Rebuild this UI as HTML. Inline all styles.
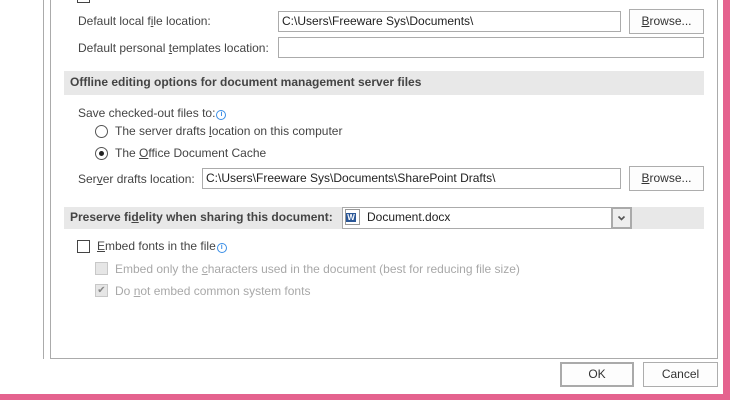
<!DOCTYPE html>
<html><head><meta charset="utf-8"><style>
*{box-sizing:border-box;margin:0;padding:0}
body{width:730px;height:400px;overflow:hidden;background:#fff;position:relative;font-family:"Liberation Sans",sans-serif;font-size:12px;color:#444}
.a{position:absolute}
.t{position:absolute;white-space:nowrap;line-height:14px}
.in{position:absolute;border:1px solid #ababab;background:#fff;padding-left:3px;line-height:18px;color:#222}
.btn{position:absolute;border:1px solid #adadad;background:#fdfdfd;text-align:center;color:#333;line-height:22px}
.band{position:absolute;background:#e8e8e8;font-weight:bold;color:#444;padding-left:6px;line-height:22px}
.info{display:inline-block;width:10px;height:10px;margin-left:1px;border:1px solid #3a8ee6;border-radius:50%;font-size:7px;line-height:8px;text-align:center;color:#3a8ee6;vertical-align:1px;font-weight:bold}
.rad{position:absolute;width:13px;height:13px;border:1px solid #555;border-radius:50%;background:#fff}
.cb{position:absolute;width:13px;height:13px;border:1px solid #444;background:#fff}
.dis{color:#a8a8a8}
u{text-decoration:underline}
</style></head><body>
<div class="a" style="left:0;top:-2px;width:44px;height:361px;border-right:1px solid #ababab"></div>
<div class="a" style="left:50px;top:-2px;width:668px;height:361px;border:1px solid #ababab;border-top:none"></div>
<div class="a" style="left:77px;top:-10px;width:13px;height:13px;border:1px solid #444"></div>
<div class="a" style="left:723px;top:0;width:7px;height:400px;background:#e5638f"></div>
<div class="a" style="left:0;top:394px;width:730px;height:6px;background:#e5638f"></div>

<div class="t" style="left:78px;top:14px">Default local f<u>i</u>le location:</div>
<div class="in" style="left:278px;top:11px;width:343px;height:21px">C:\Users\Freeware Sys\Documents\</div>
<div class="btn" style="left:629px;top:9px;width:75px;height:25px"><u>B</u>rowse...</div>
<div class="t" style="left:78px;top:41px">Default personal <u>t</u>emplates location:</div>
<div class="in" style="left:278px;top:37px;width:426px;height:21px"></div>

<div class="band" style="left:64px;top:71px;width:640px;height:24px;line-height:23px">Offline editing options for document management server files</div>
<div class="t" style="left:78px;top:106px">Save checked-out files to:<span class="info">i</span></div>
<div class="rad" style="left:95px;top:125px"></div>
<div class="t" style="left:115px;top:124px">The server drafts <u>l</u>ocation on this computer</div>
<div class="rad" style="left:95px;top:147px"><div class="a" style="left:3px;top:3px;width:5px;height:5px;border-radius:50%;background:#222"></div></div>
<div class="t" style="left:115px;top:146px">The <u>O</u>ffice Document Cache</div>
<div class="t" style="left:78px;top:172px">Ser<u>v</u>er drafts location:</div>
<div class="in" style="left:202px;top:168px;width:419px;height:21px">C:\Users\Freeware Sys\Documents\SharePoint Drafts\</div>
<div class="btn" style="left:629px;top:166px;width:75px;height:25px"><u>B</u>rowse...</div>

<div class="band" style="left:64px;top:207px;width:640px;height:22px;line-height:21px">Preserve fi<u>d</u>elity when sharing this document:</div>
<div class="in" style="left:342px;top:207px;width:290px;height:22px;line-height:19px;padding-left:24px">Document.docx</div>
<div class="a" style="left:345px;top:209px;width:15px;height:16px;border:1px solid #999;background:#fff"><div class="a" style="left:0;top:3px;width:10px;height:9px;background:#2b5797;color:#fff;font-size:8px;font-weight:bold;line-height:9px;text-align:center">W</div></div>
<div class="a" style="left:611px;top:207px;width:21px;height:22px;border:2px solid #aaa;background:#eee"><svg class="a" style="left:4px;top:5px" width="9" height="8" viewBox="0 0 9 8"><path d="M1.5 2.5 L4.5 5.5 L7.5 2.5" stroke="#555" stroke-width="1.6" fill="none"/></svg></div>

<div class="cb" style="left:77px;top:240px"></div>
<div class="t" style="left:97px;top:239px"><u>E</u>mbed fonts in the file<span class="info">i</span></div>
<div class="cb" style="left:95px;top:262px;border-color:#c8c8c8;background:#e6e6e6"></div>
<div class="t dis" style="left:115px;top:262px">Embed only the <u>c</u>haracters used in the document (best for reducing file size)</div>
<div class="cb" style="left:95px;top:284px;border-color:#c8c8c8;background:#e6e6e6;color:#888;font-size:10px;line-height:11px;text-align:center">&#10004;</div>
<div class="t dis" style="left:115px;top:284px">Do <u>n</u>ot embed common system fonts</div>

<div class="btn" style="left:560px;top:362px;width:74px;height:25px;border:2px solid #aaa;line-height:21px">OK</div>
<div class="btn" style="left:643px;top:362px;width:75px;height:25px">Cancel</div>
</body></html>
